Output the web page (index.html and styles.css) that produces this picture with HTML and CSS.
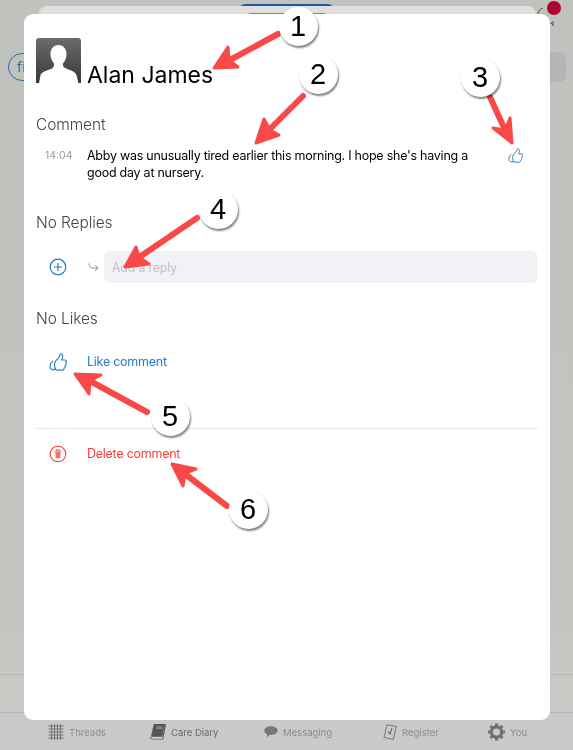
FILE: index.html
```html
<!DOCTYPE html>
<html lang="en">
<head>
<meta charset="utf-8">
<title>Comment</title>
<link rel="stylesheet" href="styles.css">
</head>
<body>
<div class="page">
  <div class="under">
    <div class="pill-back"></div>
    <div class="sheet"></div>
    <div class="pill-front"></div>
    <div class="filter">fi</div>
    <div class="search"></div>
    <svg class="sync" width="20" height="28" viewBox="0 0 20 28"><path d="M3 12a7 7 0 0 1 5-6M14 20l5 3M18 19l0 5" fill="none" stroke="#555" stroke-width="1"/></svg>
    <div class="dot"></div>
    <div class="rule rule-a"></div>
  </div>

  <nav class="tabs">
    <div class="tab">
      <svg width="16" height="16" viewBox="0 0 15 16"><path d="M3 0v16M6 0v16M9 0v16M12 0v16M0 2h15M0 5h15M0 8h15M0 11h15M0 14h15" stroke="#777" stroke-width="1" fill="none"/></svg>
      <span>Threads</span>
    </div>
    <div class="tab tab-on">
      <svg width="16" height="18" viewBox="0 0 17 18"><path d="M4 .5h12L13 14H1z" fill="#555"/><path d="M16.500 1L13.500 16.500H2.500A1.800 1.800 0 0 1 .8 14.500" fill="none" stroke="#555" stroke-width="1.200"/><path d="M1 14.500h12v1.600H2z" fill="#ccc"/><rect x="7" y="3" width="6" height="3" fill="#888"/></svg>
      <span>Care Diary</span>
    </div>
    <div class="tab">
      <svg width="14" height="12" viewBox="0 0 14 12"><path d="M7 .3c3.600 0 6.700 1.800 6.700 4.300S10.600 9 7 9H5.500L2.500 11.600l.7-3.200C1.300 7.500.3 6.200.3 4.600.3 2.100 3.400.3 7 .3z" fill="#777"/></svg>
      <span>Messaging</span>
    </div>
    <div class="tab">
      <svg width="14" height="16" viewBox="0 0 14 16"><path d="M4 .6l9.300 2-3 12.800-9.300-2z" fill="none" stroke="#777" stroke-width="1"/><path d="M5 7.500l2 2.500 2-6" fill="none" stroke="#666" stroke-width="1.100"/></svg>
      <span>Register</span>
    </div>
    <div class="tab">
      <svg width="17" height="18" viewBox="0 0 18 18"><circle cx="9" cy="9" r="5.500" fill="none" stroke="#707070" stroke-width="3.400"/><path d="M9 0v3M9 15v3M0 9h3M15 9h3M2.600 2.600l2.200 2.200M13.200 13.200l2.200 2.200M15.400 2.600l-2.200 2.200M4.800 13.200l-2.200 2.200" stroke="#707070" stroke-width="3.200"/></svg>
      <span>You</span>
    </div>
  </nav>

  <main class="modal">
    <header class="head">
      <svg class="avatar" width="45" height="45" viewBox="0 0 45 45">
        <defs><linearGradient id="ag" x1="0" y1="0" x2="0" y2="1"><stop offset="0" stop-color="#6c6c6c"/><stop offset="1" stop-color="#383838"/></linearGradient></defs>
        <path d="M3 0h39a3 3 0 0 1 3 3v42H0V3a3 3 0 0 1 3-3z" fill="url(#ag)"/>
        <path d="M22.500 7c5 0 8 4 8 9 0 4-1.500 7-3.500 9.500-.5 2 .5 4 3 5 4 1.600 9 3 10.500 6.500l2 8.500H3l1.500-8.500C6 33.500 11 32.600 15 31c2.500-1 3.500-3.500 3-5.500C16 23 14.500 20 14.500 16c0-5 3-9 8-9z" fill="#fff"/>
      </svg>
      <h1 class="name">Alan James</h1>
    </header>

    <h2 class="label label-comment">Comment</h2>
    <div class="comment">
      <time class="time">14:04</time>
      <p class="text">Abby was unusually tired earlier this morning. I hope she's having a good day at nursery.</p>
      <svg class="thumb-sm" width="15" height="16" viewBox="0 0 24 25"><path class="thumb" d="M9 11.500c3-2 5-5 5.500-8 .3-2 3.800-1.500 3.800 1.800 0 2-.8 4-1.300 5.200h4c2.500 0 3 3 1.300 4 1 1.300.5 3-.8 3.500.5 1.500-.2 3-1.500 3.300.2 1.500-.8 2.700-2.500 2.700h-6c-2 0-3-1-4.500-1.500M9 11.500c-1.500 2-2 4-1.500 7 .2 1.500.8 3.300 1.800 5.100M5 12c-3 2-4 5-3.500 8 .3 2.500 2.500 4 5 3.500"/></svg>
    </div>

    <h2 class="label label-replies">No Replies</h2>
    <div class="reply">
      <svg class="ico" width="18" height="18" viewBox="0 0 18 18"><circle cx="9" cy="9" r="7.800" fill="none" stroke="#2a7ac8" stroke-width="1.200"/><path d="M9 5v8M5 9h8" stroke="#2a7ac8" stroke-width="1.200"/></svg>
      <svg class="reply-arrow" width="11" height="11" viewBox="0 0 11 11"><path d="M1 1.500c0 3.500 1.500 4.500 4 4.500h5M7 3l3 3-3 3" fill="none" stroke="#8e8e8e" stroke-width="1"/></svg>
      <div class="input">Add a reply</div>
    </div>

    <h2 class="label label-likes">No Likes</h2>
    <div class="action like">
      <svg class="ico" width="18" height="19" viewBox="0 0 24 25"><path class="thumb" d="M9 11.500c3-2 5-5 5.500-8 .3-2 3.800-1.500 3.800 1.800 0 2-.8 4-1.300 5.200h4c2.500 0 3 3 1.300 4 1 1.300.5 3-.8 3.500.5 1.500-.2 3-1.500 3.300.2 1.500-.8 2.700-2.500 2.700h-6c-2 0-3-1-4.500-1.500M9 11.500c-1.500 2-2 4-1.500 7 .2 1.500.8 3.300 1.800 5.100M5 12c-3 2-4 5-3.500 8 .3 2.500 2.500 4 5 3.500"/></svg>
      <span>Like comment</span>
    </div>
    <div class="divider"></div>
    <div class="action del">
      <svg class="ico" width="18" height="18" viewBox="0 0 18 18"><circle cx="9" cy="9" r="7.800" fill="none" stroke="#f4433c" stroke-width="1.100"/><path d="M5.500 6h7M7.500 6V4.800h3V6" fill="none" stroke="#f4433c" stroke-width=".8"/><path d="M6.300 7l.5 6.200h4.400l.5-6.200z" fill="#f6706a"/></svg>
      <span>Delete comment</span>
    </div>
  </main>

  <svg class="arrows" width="573" height="750" viewBox="0 0 573 750">
    <g class="arrow">
      <path d="M278 34L228 61"/><path class="head" d="M214 68L228 47L229 60L238 67z"/>
      <path d="M303 96L268 131"/><path class="head" d="M256 143L264 119L270 130L279 135z"/>
      <path d="M490 97L505 130"/><path class="head" d="M512 143L493 128L505 130L510 118z"/>
      <path d="M197 218L138 258"/><path class="head" d="M125 267L136 247L139 257L149 264z"/>
      <path d="M147 412L90 381"/><path class="head" d="M75 374L89 394L90 381L101 375z"/>
      <path d="M227 506L185 474"/><path class="head" d="M172 464L183 486L185 473L196 469z"/>
    </g>
  </svg>
  <div class="badge b1">1</div>
  <div class="badge b2">2</div>
  <div class="badge b3">3</div>
  <div class="badge b4">4</div>
  <div class="badge b5">5</div>
  <div class="badge b6">6</div>
</div>
</body>
</html>
```
FILE: styles.css
```css
* { box-sizing: border-box; }
html, body { margin: 0; padding: 0; }
body { font-family: Inter, "Liberation Sans", sans-serif; }

.page {
  position: relative;
  width: 573px;
  height: 750px;
  overflow: hidden;
  background: linear-gradient(#c0c2be 0, #c2c4c0 80%, #c8cac6 95%);
  display: flex;
  flex-direction: column;
  justify-content: flex-end;
  filter: blur(.3px);
}

/* dimmed page behind the sheet */
.under { position: absolute; inset: 0; }
.pill-back { position: absolute; left: 239px; top: 4px; width: 95px; height: 12px; background: #1c5aa5; border-radius: 6px; }
.sheet { position: absolute; left: 39px; top: 6px; width: 497px; height: 100px; background: #dfe0de; border-radius: 8px 8px 0 0; }
.pill-front { position: absolute; left: 245px; top: 13px; width: 84px; height: 6px; border-top: 1px solid #5a8cc2; border-radius: 6px 6px 0 0; }
.filter { position: absolute; left: 8px; top: 53px; width: 30px; height: 28px; border: 1px solid #2a6cb5; border-radius: 14px; color: #3a6ea5; font-size: 14px; line-height: 26px; padding-left: 8px; }
.search { position: absolute; left: 530px; top: 52px; width: 36px; height: 30px; background: #b4b5b6; border-radius: 7px; }
.sync { position: absolute; left: 535px; top: 2px; }
.dot { position: absolute; left: 547px; top: 1px; width: 14px; height: 14px; border-radius: 50%; background: #ab0530; }
.rule { position: absolute; left: 0; right: 0; height: 1px; background: #b4b6b2; }
.rule-a { top: 674px; }

/* tab bar */
.tabs {
  position: relative;
  height: 38px;
  padding-left: 48px;
  display: grid;
  grid-template-columns: 102px 114px 119px 105px auto;
  align-items: center;
  background: #c9c9c9;
  border-top: 1px solid #b6b6b6;
  color: #8e8e8e;
  font-size: 9.500px;
}
.tab { display: flex; align-items: center; gap: 5px; padding-top: 1px; }
.tab-on { color: #6a6a6a; }

/* modal */
.modal {
  position: absolute;
  left: 24px;
  top: 14px;
  width: 526px;
  height: 706px;
  background: #fff;
  border-radius: 9px;
  padding: 24px 12px 0;
  display: flex;
  flex-direction: column;
}
.head { display: flex; align-items: flex-end; gap: 6px; height: 45px; }
.avatar { display: block; flex: none; }
.name { margin: 0; font-size: 23px; font-weight: 400; line-height: 15px; color: #000; }

.label { margin: 0; font-size: 15.500px; font-weight: 300; letter-spacing: -.1px; line-height: 20px; color: #444; }
.label-comment { margin-top: 32px; }
.label-replies { margin-top: 32px; }
.label-likes { margin-top: 26px; }

.comment { display: flex; align-items: flex-start; margin-top: 12px; }
.time { flex: none; width: 51px; padding-left: 9px; font-size: 10.500px; line-height: 17px; color: #999; }
.text { margin: 0; flex: 1; font-size: 12.500px; letter-spacing: -.25px; line-height: 17px; color: #000; padding-right: 30px; }
.thumb-sm { flex: none; margin: 0 15px 0 0; }
.thumb { fill: none; stroke: #2a7ac8; stroke-width: 1.500; stroke-linejoin: round; stroke-linecap: round; }

.reply { display: flex; align-items: center; margin-top: 18px; padding-left: 13px; }
.ico { flex: none; display: block; }
.reply-arrow { margin: 0 7px 0 21px; flex: none; }
.input { flex: 1; height: 32px; padding-left: 8px; margin-left: -2px; background: #f1f1f6; border-radius: 7px; font-size: 12.500px; letter-spacing: -.25px; line-height: 33px; color: #c2c2c6; }

.action { display: flex; align-items: center; gap: 20px; padding-left: 13px; font-size: 12.500px; letter-spacing: -.25px; line-height: 18px; }
.like { margin-top: 23px; color: #2a7ac8; }
.del { margin-top: 16px; color: #fb3f38; }
.divider { height: 1px; background: #e7e7e7; margin-top: 57px; }

/* annotations */
.arrows { position: absolute; left: 0; top: 0; }
.arrow path { fill: none; stroke: #f94848; stroke-width: 6; stroke-linecap: round; stroke-linejoin: round; }
.arrow .head { fill: #f94848; stroke-width: 3; }

.badge {
  position: absolute;
  width: 39px;
  height: 39px;
  margin: -19.500px 0 0 -19.500px;
  border-radius: 50%;
  background: #fff;
  box-shadow: 1px 2px 2px rgba(0,0,0,.5);
  font-family: "Liberation Sans", sans-serif;
  font-size: 29px;
  line-height: 39px;
  text-align: center;
  color: #000;
}
.b1 { left: 298px; top: 26px; }
.b2 { left: 318px; top: 74px; }
.b3 { left: 480px; top: 77px; }
.b4 { left: 218px; top: 209px; }
.b5 { left: 170px; top: 416px; }
.b6 { left: 248px; top: 509px; }
```
